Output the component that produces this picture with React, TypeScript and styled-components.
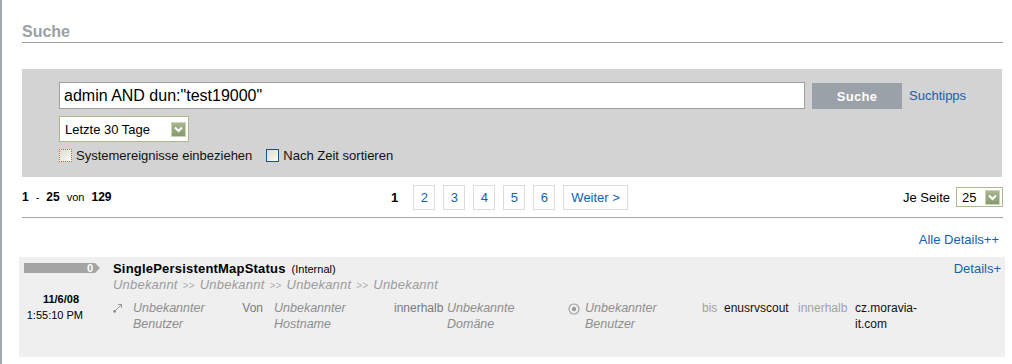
import React from "react";
import styled, { createGlobalStyle } from "styled-components";

const Global = createGlobalStyle`
  html, body { margin: 0; padding: 0; background: #fff; }
  body { font-family: "Liberation Sans", Arial, sans-serif; color: #000; }
  * { box-sizing: border-box; }
`;

const Page = styled.div`
  min-height: 364px;
  border-left: 2px solid #a3a8ad;
  padding: 22px 9px 0 20px;
  display: flex;
  flex-direction: column;
`;

const Heading = styled.h1`
  margin: 0;
  font-size: 16px;
  line-height: 20px;
  font-weight: bold;
  color: #9ba1a7;
  border-bottom: 1px solid #9ba1a7;
`;

const SearchPanel = styled.div`
  margin: 26px 1px 0 0;
  height: 108px;
  background: #d3d3d3;
  padding: 13px 0 0 37px;
  display: flex;
  flex-direction: column;
`;

const QueryRow = styled.div`
  display: flex;
  align-items: center;
  gap: 7px;
`;

const QueryInput = styled.input`
  width: 746px;
  height: 27px;
  border: 1px solid #9aa0a6;
  padding: 0 4px;
  font-family: "Liberation Sans", Arial, sans-serif;
  font-size: 16px;
  color: #000;
  background: #fff;
  outline: none;
`;

const SearchButton = styled.button`
  width: 90px;
  height: 26px;
  margin-top: 1px;
  border: none;
  background: #9aa1a8;
  color: #fff;
  font-family: "Liberation Sans", Arial, sans-serif;
  font-weight: bold;
  font-size: 13px;
  letter-spacing: 0.3px;
  padding: 0;
`;

const Link = styled.a<{ $size?: number }>`
  color: #1461b0;
  font-size: ${(p) => p.$size ?? 13}px;
  text-decoration: none;
  cursor: pointer;
`;

const FakeSelect = styled.div<{ $w: number; $h: number }>`
  width: ${(p) => p.$w}px;
  height: ${(p) => p.$h}px;
  border: 1px solid #a9bb8d;
  background: #fff;
  display: flex;
  align-items: center;
  justify-content: space-between;
  padding: 0 2px 0 5px;
  font-size: 13px;
`;

const SelectArrow = styled.span`
  width: 15px;
  height: 15px;
  border: 1px solid #c9d4b8;
  background: linear-gradient(#a6b690, #879a6d);
  display: flex;
  align-items: center;
  justify-content: center;
`;

const RangeRow = styled.div`
  margin-top: 7px;
`;

const CheckRow = styled.div`
  margin-top: 6px;
  display: flex;
  align-items: center;
  font-size: 13px;
  color: #111;
`;

const CheckItem = styled.label`
  display: flex;
  align-items: center;
  gap: 4px;
  margin-right: 14px;
`;

const CheckBox = styled.span<{ $focus?: boolean }>`
  width: 13px;
  height: 13px;
  border: 1px ${(p) => (p.$focus ? "dotted #c0652a" : "solid #1c5182")};
  background: linear-gradient(135deg, #dcdcd4, #fbfbf8);
`;

const Pager = styled.div`
  height: 41px;
  display: grid;
  grid-template-columns: 1fr auto 1fr;
  align-items: center;
  border-bottom: 1px solid #a4a4a4;
`;

const Count = styled.div`
  display: flex;
  align-items: center;
  gap: 7px;
  font-size: 12px;
  b { font-weight: bold; }
  span { font-size: 11px; }
`;

const Pages = styled.div`
  display: flex;
  align-items: center;
  gap: 8px;
  margin-left: -6px;
`;

const CurrentPage = styled.b`
  font-size: 13px;
  margin-right: 7px;
`;

const PageBox = styled.a<{ $wide?: boolean }>`
  height: 25px;
  min-width: 22px;
  padding: 0 ${(p) => (p.$wide ? 7 : 0)}px;
  border: 1px solid #dcdcdc;
  color: #1461b0;
  font-size: 13px;
  display: flex;
  align-items: center;
  justify-content: center;
`;

const PerPage = styled.div`
  justify-self: end;
  display: flex;
  align-items: center;
  gap: 6px;
  font-size: 13px;
`;

const AllDetails = styled.div`
  height: 39px;
  display: flex;
  align-items: center;
  justify-content: flex-end;
  padding: 3px 4px 0 0;
`;

const EventRow = styled.div`
  margin: 0 -2px 0 -3px;
  height: 100px;
  background: #efefef;
  display: grid;
  grid-template-columns: 94px 1fr;
`;

const EventSide = styled.div`
  padding: 6px 0 0 5px;
  display: flex;
  flex-direction: column;
`;

const CountBar = styled.div`
  width: 76px;
  height: 10px;
  background: #a4a4a4;
  clip-path: polygon(0 0, calc(100% - 5px) 0, 100% 50%, calc(100% - 5px) 100%, 0 100%);
  color: #fff;
  font-weight: bold;
  font-size: 11px;
  line-height: 10px;
  text-align: right;
  padding-right: 7px;
`;

const Stamp = styled.div`
  margin-top: 18px;
  padding-right: 30px;
  text-align: right;
  font-size: 11px;
  line-height: 16px;
  b { display: block; padding-right: 4px; }
`;

const EventMain = styled.div`
  padding: 4px 4px 0 0;
  display: flex;
  flex-direction: column;
`;

const TitleLine = styled.div`
  display: flex;
  justify-content: space-between;
  align-items: baseline;
  line-height: 16px;
`;

const EventName = styled.span`
  font-size: 13px;
  font-weight: bold;
  letter-spacing: 0.2px;
  small {
    font-size: 11px;
    font-weight: normal;
    letter-spacing: 0;
    margin-left: 6px;
  }
`;

const Crumbs = styled.div`
  font-size: 13px;
  line-height: 16px;
  font-style: italic;
  letter-spacing: 0.2px;
  color: #9c9c9c;
`;

const Sep = styled.span`
  font-style: normal;
  font-size: 10px;
  color: #b0b0b0;
  margin: 0 5px;
`;

const Fields = styled.div`
  margin-top: 6px;
  display: grid;
  grid-template-columns: 126px 35px 120px 53px 121px 134px 22px 74px 57px 72px;
  font-size: 12px;
  line-height: 16px;
`;

const IconValue = styled.div<{ $icon: number }>`
  display: grid;
  grid-template-columns: ${(p) => p.$icon}px 1fr;
  align-items: start;
  svg { margin-top: 3px; }
`;

const Value = styled.div<{ $plain?: boolean }>`
  max-width: ${(p) => (p.$plain ? "none" : "100px")};
  font-style: ${(p) => (p.$plain ? "normal" : "italic")};
  font-size: ${(p) => (p.$plain ? 12 : 12.5)}px;
  color: ${(p) => (p.$plain ? "#111" : "#8e8e8e")};
`;

const Label = styled.div<{ $light?: boolean; $right?: boolean }>`
  color: ${(p) => (p.$light ? "#a2a2a2" : "#7a7a7a")};
  text-align: ${(p) => (p.$right ? "right" : "left")};
  padding-right: ${(p) => (p.$right ? 11 : 0)}px;
`;

const Chevron = () => (
  <svg width="11" height="9" viewBox="0 0 11 9">
    <path d="M2 2.5 L5.5 6 L9 2.5" stroke="#fff" strokeWidth="2" fill="none" />
  </svg>
);

const SourceIcon = () => (
  <svg width="10" height="10" viewBox="0 0 10 10">
    <path d="M2 8 L8.5 1.5" stroke="#9a9a9a" strokeWidth="1" fill="none" />
    <path d="M5 1.5 H8.5 V5" stroke="#9a9a9a" strokeWidth="1" fill="none" />
    <circle cx="1.6" cy="8.4" r="1.3" fill="#8a8a8a" />
  </svg>
);

const TargetIcon = () => (
  <svg width="12" height="12" viewBox="0 0 12 12">
    <circle cx="6" cy="6" r="5" stroke="#9a9a9a" strokeWidth="1.1" fill="none" />
    <circle cx="6" cy="6" r="2.2" fill="#9a9a9a" />
  </svg>
);

export default function App() {
  return (
    <>
      <Global />
      <Page>
        <Heading>Suche</Heading>
        <SearchPanel>
          <QueryRow>
            <QueryInput defaultValue={'admin AND dun:"test19000"'} />
            <SearchButton>Suche</SearchButton>
            <Link>Suchtipps</Link>
          </QueryRow>
          <RangeRow>
            <FakeSelect $w={130} $h={26}>
              Letzte 30 Tage
              <SelectArrow>
                <Chevron />
              </SelectArrow>
            </FakeSelect>
          </RangeRow>
          <CheckRow>
            <CheckItem>
              <CheckBox $focus />
              Systemereignisse einbeziehen
            </CheckItem>
            <CheckItem>
              <CheckBox />
              Nach Zeit sortieren
            </CheckItem>
          </CheckRow>
        </SearchPanel>

        <Pager>
          <Count>
            <b>1</b>
            <span>-</span>
            <b>25</b>
            <span>von</span>
            <b>129</b>
          </Count>
          <Pages>
            <CurrentPage>1</CurrentPage>
            {["2", "3", "4", "5", "6"].map((n) => (
              <PageBox key={n}>{n}</PageBox>
            ))}
            <PageBox $wide>Weiter &gt;</PageBox>
          </Pages>
          <PerPage>
            Je Seite
            <FakeSelect $w={47} $h={20}>
              25
              <SelectArrow>
                <Chevron />
              </SelectArrow>
            </FakeSelect>
          </PerPage>
        </Pager>

        <AllDetails>
          <Link>Alle Details++</Link>
        </AllDetails>

        <EventRow>
          <EventSide>
            <CountBar>0</CountBar>
            <Stamp>
              <b>11/6/08</b>
              1:55:10 PM
            </Stamp>
          </EventSide>
          <EventMain>
            <TitleLine>
              <EventName>
                SinglePersistentMapStatus<small>(Internal)</small>
              </EventName>
              <Link>Details+</Link>
            </TitleLine>
            <Crumbs>
              Unbekannt<Sep>&gt;&gt;</Sep>Unbekannt<Sep>&gt;&gt;</Sep>Unbekannt<Sep>&gt;&gt;</Sep>Unbekannt
            </Crumbs>
            <Fields>
              <IconValue $icon={20}>
                <SourceIcon />
                <Value>Unbekannter Benutzer</Value>
              </IconValue>
              <Label $right>Von</Label>
              <Value>Unbekannter Hostname</Value>
              <Label>innerhalb</Label>
              <Value>Unbekannte Domäne</Value>
              <IconValue $icon={17}>
                <TargetIcon />
                <Value>Unbekannter Benutzer</Value>
              </IconValue>
              <Label $light>bis</Label>
              <Value $plain>enusrvscout</Value>
              <Label $light>innerhalb</Label>
              <Value $plain>cz.moravia-it.com</Value>
            </Fields>
          </EventMain>
        </EventRow>
      </Page>
    </>
  );
}
